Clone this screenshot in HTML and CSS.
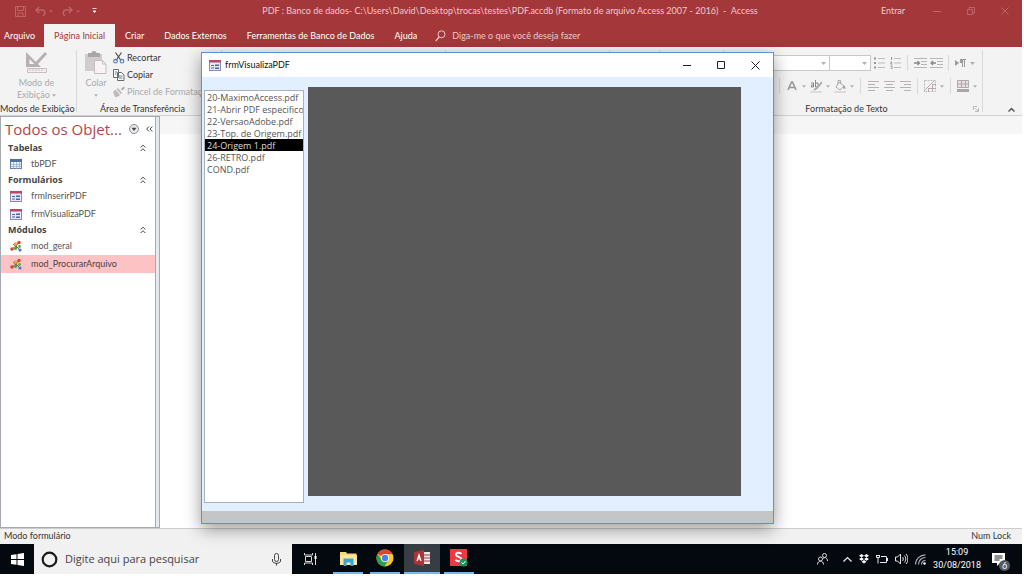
FILE: index.html
```
<!DOCTYPE html>
<html lang="pt-BR">
<head>
<meta charset="utf-8">
<title>PDF : Banco de dados - Access</title>
<link rel="stylesheet" href="styles.css">
</head>
<body>
<svg class="defs" width="0" height="0" aria-hidden="true">
  <symbol id="form" viewBox="0 0 12 11"><rect x=".5" y=".5" width="11" height="10" fill="#e4e9f5" stroke="#8b8fae"/><path d="M0 0h12v2.500H0z" fill="#b8476a"/><path d="M2 5.500h3M2 8h3" stroke="#4a65a8"/><path d="M6 4.500h4v1.500H6zM6 7.500h4V9H6z" fill="#4a65a8"/></symbol>
  <symbol id="table" viewBox="0 0 12 11"><rect x=".5" y=".5" width="11" height="9" fill="#edf3fb" stroke="#6480ad"/><path d="M0 0h12v3H0z" fill="#4d70a8"/><path d="M1 5.500h10M1 7.500h10M3.500 3v7M6.500 3v7M9.500 3v7" stroke="#8ea8cf" stroke-width=".7"/></symbol>
  <symbol id="module" viewBox="0 0 12 12"><path d="M2 9l4-3 4 4M6 6l3-4M3 4l4 4" stroke="#7b6a55" fill="none"/><circle cx="9" cy="2.500" r="1.700" fill="#e0452f"/><circle cx="5.500" cy="4" r="1.800" fill="#e9a23b"/><circle cx="2" cy="9" r="1.800" fill="#d9472b"/><circle cx="5.500" cy="8.500" r="1.600" fill="#4aa556"/><circle cx="10" cy="10" r="1.600" fill="#4878d0"/><circle cx="9.500" cy="6.500" r="1.400" fill="#55a855"/></symbol>
  <symbol id="dbl" viewBox="0 0 6 8"><path d="M.7 3.500L3 1.200l2.300 2.300M.7 7L3 4.700 5.300 7" fill="none" stroke="#444"/></symbol>
  <symbol id="caret" viewBox="0 0 5 3"><path d="M0 0h5L2.500 3z" fill="currentColor"/></symbol>
</svg>
<div class="screen">
  <header class="titlebar">
    <div class="quick">
      <button aria-label="Salvar"><svg width="11" height="11" viewBox="0 0 11 11"><path d="M.5.5h10v10h-10zM2.500.5v4h6v-4M3 10V7h5v3" fill="none" stroke="currentColor"/></svg></button>
      <button aria-label="Desfazer"><svg width="18" height="11" viewBox="0 0 18 11"><path d="M4 1L1 4l3 3M1 4h6c3 0 4 4 1 6" fill="none" stroke="currentColor" stroke-width="1.500"/><path d="M14 4.500h4l-2 2z" fill="currentColor"/></svg></button>
      <button aria-label="Refazer"><svg width="18" height="11" viewBox="0 0 18 11"><path d="M7 1l3 3-3 3M10 4H4C1 4 0 8 3 10" fill="none" stroke="currentColor" stroke-width="1.500"/><path d="M14 4.500h4l-2 2z" fill="currentColor"/></svg></button>
      <button class="more" aria-label="Personalizar"><svg width="5" height="6" viewBox="0 0 5 6"><path d="M.5.5h4M1 3h3L2.500 4.500z" fill="currentColor" stroke="currentColor" stroke-width=".8"/></svg></button>
    </div>
    <h1 class="title">PDF : Banco de dados- C:\Users\David\Desktop\trocas\testes\PDF.accdb (Formato de arquivo Access 2007 - 2016) &nbsp;- &nbsp;Access</h1>
    <button class="signin">Entrar</button>
    <div class="winbtns">
      <button aria-label="Minimizar"><svg width="8" height="8" viewBox="0 0 8 8"><path d="M0 4.500h8" stroke="currentColor"/></svg></button>
      <button aria-label="Restaurar"><svg width="8" height="8" viewBox="0 0 8 8"><path d="M.5 2.500h5v5h-5zM2 2V.5h5.500V6H6" fill="none" stroke="currentColor"/></svg></button>
      <button aria-label="Fechar"><svg width="8" height="8" viewBox="0 0 8 8"><path d="M.5.5l7 7M7.500.5l-7 7" stroke="currentColor"/></svg></button>
    </div>
  </header>
  <nav class="tabs">
    <button>Arquivo</button>
    <button class="active">Página Inicial</button>
    <button>Criar</button>
    <button>Dados Externos</button>
    <button>Ferramentas de Banco de Dados</button>
    <button>Ajuda</button>
    <label class="tell"><svg width="11" height="12" viewBox="0 0 11 12"><circle cx="6.500" cy="4.300" r="3.500" fill="none" stroke="currentColor"/><path d="M4.200 7L.7 11" stroke="currentColor" stroke-width="1.200"/></svg><input aria-label="Diga-me" placeholder="Diga-me o que você deseja fazer"></label>
  </nav>
  <section class="ribbon">
    <div class="group views">
      <button class="big"><svg width="23" height="23" viewBox="0 0 23 23"><path d="M1 1v15h15zM4.500 8v5h5z" fill="#b5b1b3" fill-rule="evenodd"/><path d="M21 2L10 14" stroke="#b5b1b3" stroke-width="3"/><path d="M10.500 12l-2 4 4-2z" fill="#b5b1b3"/><path d="M2.500 17.500h19v4h-19zM5 18v2M8 18v2M11 18v2M14 18v2M17 18v2" fill="#f5eeee" stroke="#cdbfc1"/></svg><span>Modo de<br>Exibição <svg class="car" width="4" height="3"><use href="#caret"/></svg></span></button>
      <h2>Modos de Exibição</h2>
    </div>
    <div class="group clip">
      <div class="cols">
        <button class="big"><svg width="22" height="23" viewBox="0 0 22 23"><path d="M0 3h17v17H0z" fill="#d1cdcf"/><path d="M3 2h3l2-2h2l2 2h3v4H3z" fill="#aaa6a8"/><path d="M9.500 9.500h8l3.500 3.500v9.500H9.500z" fill="#f8f3f5" stroke="#c5bdc0"/><path d="M17.500 9.500V13H21" fill="none" stroke="#c5bdc0"/></svg><span>Colar<br><svg class="car" width="4" height="3"><use href="#caret"/></svg></span></button>
        <div class="small">
          <button><svg width="12" height="12" viewBox="0 0 12 12"><path d="M2.500.5l5.500 8M8.500.5l-5.500 8" stroke="#555" stroke-width="1.300"/><circle cx="2.500" cy="9.200" r="1.800" fill="none" stroke="#4f84bd" stroke-width="1.200"/><circle cx="9" cy="9.200" r="1.800" fill="none" stroke="#4f84bd" stroke-width="1.200"/></svg>Recortar</button>
          <button><svg width="12" height="12" viewBox="0 0 12 12"><path d="M.5.5h5v8h-5zM4.500 3.500h4l2.500 2.500v5.500H4.500z" fill="#fff" stroke="#6b6b6b"/><path d="M2 3h2M2 5h1.500M6 7h3.500M6 9h3.500" stroke="#4f84bd"/></svg>Copiar</button>
          <button class="off"><svg width="12" height="12" viewBox="0 0 12 12"><path d="M8 3l3-2.500 1 1.500-3 2.500z" fill="#aaa"/><path d="M5 2l4 5-1.500 1L3.500 3zM2.500 3.500L7 9c-2 2-4 2-5 2L0 6z" fill="#bdb9bb"/></svg>Pincel de Formatação</button>
        </div>
      </div>
      <h2>Área de Transferência</h2>
    </div>
    <div class="group g1"></div><div class="group g2"></div><div class="group g3"></div><div class="group g4"></div>
    <div class="group format">
      <div class="row r1">
        <button class="combo c1" aria-label="Fonte"><svg class="car" width="5" height="3"><use href="#caret"/></svg></button>
        <button class="combo c2" aria-label="Tamanho"><svg class="car" width="5" height="3"><use href="#caret"/></svg></button>
        <button aria-label="Marcadores"><svg width="11" height="12" viewBox="0 0 11 12"><path d="M0 1.500h2M0 6h2M0 10.500h2" stroke="#999" stroke-width="2"/><path d="M4 1.500h7M4 6h7M4 10.500h7" stroke="#c0bcbe"/></svg></button>
        <button aria-label="Numeração"><svg width="11" height="12" viewBox="0 0 11 12"><path d="M1.500 0v3M.5 5h1.500L.5 7H2.500M.5 9H2v3H.5" fill="none" stroke="#999"/><path d="M4 1.500h7M4 6h7M4 10.500h7" stroke="#c0bcbe"/></svg></button>
        <i class="sep"></i>
        <button aria-label="Diminuir recuo"><svg width="13" height="11" viewBox="0 0 13 11"><path d="M0 .5h13M7 3.500h6M7 6.500h6M0 9.500h13" stroke="#b9b5b7"/><path d="M0 5h5M3.500 3l2 2-2 2" fill="none" stroke="#888" stroke-width="1.300"/></svg></button>
        <button aria-label="Aumentar recuo"><svg width="13" height="11" viewBox="0 0 13 11"><path d="M0 .5h13M7 3.500h6M7 6.500h6M0 9.500h13" stroke="#b9b5b7"/><path d="M1 5h5M3 3L1 5l2 2" fill="none" stroke="#888" stroke-width="1.300"/></svg></button>
        <i class="sep"></i>
        <button class="dd" aria-label="Direção"><svg width="11" height="8" viewBox="0 0 11 8"><path d="M0 1v6l4-3z" fill="#999"/><path d="M5 .5h6M7.500 1v7M9.500 1v7" stroke="#999"/><circle cx="6.500" cy="2.500" r="1.800" fill="#999"/></svg><svg class="car" width="5" height="3"><use href="#caret"/></svg></button>
      </div>
      <div class="row r2">
        <i class="sep"></i>
        <button class="dd" aria-label="Cor da fonte"><svg width="12" height="13" viewBox="0 0 12 13"><path d="M2 10L5.500 2h1L10 10M3.500 7.500h5" fill="none" stroke="#999" stroke-width="1.600"/></svg><svg class="car" width="4" height="3"><use href="#caret"/></svg></button>
        <button class="dd" aria-label="Realce"><svg width="12" height="13" viewBox="0 0 12 13"><path d="M1 3h2.500v4H1.500V5h2M5.500 0v7H8V3H6" fill="none" stroke="#888"/><path d="M12 2L7 8l-3 2" stroke="#aaa" stroke-width="1.800" fill="none"/><path d="M0 11h12v2H0z" fill="#e3d8db"/></svg><svg class="car" width="4" height="3"><use href="#caret"/></svg></button>
        <button class="dd" aria-label="Cor de fundo"><svg width="12" height="13" viewBox="0 0 12 13"><path d="M5 2l5 4-4 4-4-3zM4 4V.5h2.500V4" fill="none" stroke="#aaa"/><path d="M10 5l2 3.500h-3z" fill="#999"/><path d="M0 11h12v2H0z" fill="#e3d8db"/></svg><svg class="car" width="4" height="3"><use href="#caret"/></svg></button>
        <i class="sep"></i>
        <button aria-label="À esquerda"><svg width="11" height="10" viewBox="0 0 11 10"><path d="M0 .5h11M0 3.500h7M0 6.500h11M0 9.500h7" stroke="#b5b1b3"/></svg></button>
        <button aria-label="Centralizar"><svg width="11" height="10" viewBox="0 0 11 10"><path d="M0 .5h11M2 3.500h7M0 6.500h11M2 9.500h7" stroke="#b5b1b3"/></svg></button>
        <button aria-label="À direita"><svg width="11" height="10" viewBox="0 0 11 10"><path d="M0 .5h11M4 3.500h7M0 6.500h11M4 9.500h7" stroke="#b5b1b3"/></svg></button>
        <i class="sep"></i>
        <button class="dd" aria-label="Linhas de grade"><svg width="12" height="12" viewBox="0 0 12 12"><path d="M.5.5h11v11H.5z" fill="none" stroke="#bbb" stroke-dasharray="2 1"/><path d="M0 11L11 0M4.500 8v4M8.500 4v8M8 4.500h4M4 8.500h8" stroke="#bba9ae"/></svg><svg class="car" width="4" height="3"><use href="#caret"/></svg></button>
        <i class="sep"></i>
        <button class="dd" aria-label="Cor alternada"><svg width="12" height="12" viewBox="0 0 12 12"><path d="M.5.5h11v7H.5zM0 4h12M4.500 0v8M8.500 0v8" fill="#e8e0e2" stroke="#b0a8ab"/><path d="M0 9h12v3H0z" fill="#aaa6a8"/></svg><svg class="car" width="4" height="3"><use href="#caret"/></svg></button>
      </div>
      <h2>Formatação de Texto</h2>
      <button class="launch" aria-label="Mais opções"><svg width="6" height="6" viewBox="0 0 6 6"><path d="M.5 4V.5H4M2 2l3 3M5.500 2v3.500H2" fill="none" stroke="#bbb"/></svg></button>
    </div>
    <button class="collapse" aria-label="Recolher"><svg width="7" height="5" viewBox="0 0 7 5"><path d="M.5 4.500l3-3 3 3" fill="none" stroke="#555" stroke-width="1.500"/></svg></button>
  </section>
  <main class="work">
    <aside class="pane">
      <div class="panehead"><h2>Todos os Objet...</h2>
        <button aria-label="Filtro"><svg width="10" height="10" viewBox="0 0 10 10"><circle cx="5" cy="5" r="4.500" fill="#e9e9ec" stroke="#8a8c92"/><path d="M2.500 3.800h5L5 7z" fill="#444"/></svg></button>
        <button aria-label="Recolher painel"><svg width="7" height="6" viewBox="0 0 7 6"><path d="M3 .5L.7 3 3 5.500M6.300.5L4 3l2.300 2.500" fill="none" stroke="#444"/></svg></button>
      </div>
      <h3>Tabelas<svg width="6" height="8"><use href="#dbl"/></svg></h3>
      <ul><li><svg width="12" height="11"><use href="#table"/></svg>tbPDF</li></ul>
      <h3>Formulários<svg width="6" height="8"><use href="#dbl"/></svg></h3>
      <ul><li><svg width="12" height="11"><use href="#form"/></svg>frmInserirPDF</li><li><svg width="12" height="11"><use href="#form"/></svg>frmVisualizaPDF</li></ul>
      <h3>Módulos<svg width="6" height="8"><use href="#dbl"/></svg></h3>
      <ul><li><svg width="12" height="12"><use href="#module"/></svg>mod_geral</li><li class="sel"><svg width="12" height="12"><use href="#module"/></svg>mod_ProcurarArquivo</li></ul>
    </aside>
    <div class="canvas"></div>
  </main>
  <footer class="status"><span>Modo formulário</span><span>Num Lock</span></footer>
  <div class="taskbar">
    <button class="start" aria-label="Iniciar"><svg width="13" height="13" viewBox="0 0 13 13"><path d="M0 2l5.500-.8V6H0zM6.500 1L13 0v6H6.500zM0 7h5.500v4.800L0 11zM6.500 7H13v6l-6.500-1z" fill="#fff"/></svg></button>
    <label class="search"><svg width="17" height="17" viewBox="0 0 17 17"><circle cx="8.500" cy="8.500" r="6.800" fill="none" stroke="#1b1b1b" stroke-width="2.200"/></svg><input aria-label="Pesquisar" placeholder="Digite aqui para pesquisar"><svg width="9" height="13" viewBox="0 0 9 13"><rect x="2.500" y=".5" width="4" height="8" rx="2" fill="none" stroke="#444"/><path d="M.5 6v2c0 3 8 3 8 0V6M4.500 10v2.500" fill="none" stroke="#444"/></svg></label>
    <button class="view" aria-label="Visão de tarefas"><svg width="13" height="12" viewBox="0 0 13 12"><path d="M.5 0v2h8V0M.5 12v-2h8v2M1.500 3.500h6v5h-6zM11.500 0v12" fill="none" stroke="#d8d8d8"/><path d="M10.500 3h2v3h-2z" fill="#fff"/></svg></button>
    <button class="app" aria-label="Explorador"><svg width="17" height="15" viewBox="0 0 17 15"><path d="M0 1h6l1 1.500h9.500V14H0z" fill="#f7d673"/><path d="M0 4h17v10H0z" fill="#ffe596"/><path d="M3.500 7.500h10V15h-3v-3.500h-4V15h-3z" fill="#35a4e0"/></svg></button>
    <button class="app" aria-label="Chrome"><svg width="18" height="18" viewBox="0 0 18 18"><circle cx="9" cy="9" r="8.500" fill="#f6c927"/><path d="M9 9L1.600 4.700A8.500 8.500 0 0 1 16.500 5H9z" fill="#df4333"/><path d="M1.600 4.700A8.500 8.500 0 0 0 8.500 17.500l4-6.500L9 9 5.500 11z" fill="#2c9e52"/><circle cx="9" cy="9" r="4" fill="#fff"/><circle cx="9" cy="9" r="3.200" fill="#4383ee"/></svg></button>
    <button class="app on" aria-label="Access"><svg width="17" height="16" viewBox="0 0 17 16"><path d="M9 2h7v12H9z" fill="#f4e9ea"/><path d="M9 5h7M9 8h7M9 11h7" stroke="#a4373a" stroke-width="1.200"/><path d="M0 2l10-2v16L0 14z" fill="#a8353a"/><path d="M3 11l2-6 2 6M3.700 9h2.600" fill="none" stroke="#fff" stroke-width="1.200"/></svg></button>
    <button class="app" aria-label="S"><svg width="18" height="18" viewBox="0 0 18 18"><path d="M0 0h17v17H0z" fill="#ee3843"/><path d="M11.500 5C10 3 6 3.500 6 5.700S11.500 8 11.500 10.300 7 13 5.500 10.800" fill="none" stroke="#fff" stroke-width="2"/><circle cx="13.500" cy="13.500" r="4" fill="#15945c"/><path d="M11.500 13.500l1.500 1.500 2.500-3" fill="none" stroke="#fff"/></svg></button>
    <div class="tray">
      <svg class="people" width="11" height="12" viewBox="0 0 11 12"><circle cx="7.500" cy="2.500" r="2" fill="none" stroke="#ddd"/><circle cx="3.500" cy="6" r="2" fill="none" stroke="#ddd"/><path d="M.5 11.500c0-4.500 6-4.500 6 0M6 5.500c2-2 4.500-.5 4.500 2.500" fill="none" stroke="#ddd"/></svg>
      <svg width="9" height="6" viewBox="0 0 9 6"><path d="M.5 5.500l4-4 4 4" fill="none" stroke="#eee" stroke-width="1.200"/></svg>
      <svg width="10" height="10" viewBox="0 0 10 10"><path d="M2.500 0L5 1.700 2.500 3.400 0 1.700zM7.500 0L10 1.700 7.500 3.400 5 1.700zM2.500 3.400L5 5 2.500 6.800 0 5zM7.500 3.400L10 5 7.500 6.800 5 5zM5 6l2.500 1.700L5 9.500 2.500 7.700z" fill="#fff"/></svg>
      <svg width="12" height="10" viewBox="0 0 12 10"><path d="M5 2.500h5.500v6H4M11.500 4v3" fill="none" stroke="#e8e8e8"/><path d="M.5 1v2.500h3V1M2 3v6.500M0 1.500h4" stroke="#e8e8e8" fill="none"/></svg>
      <svg width="13" height="12" viewBox="0 0 13 12"><path d="M.5 4h2l3-3v10l-3-3h-2zM7.500 4c1 1 1 3 0 4M9.300 2.500c2 2 2 5 0 7M11 1c2.500 3 2.500 7 0 10" fill="none" stroke="#e8e8e8"/></svg>
      <svg width="11" height="11" viewBox="0 0 11 11"><path d="M.5 10.500C.5 5 5 .8 10.500.8M3.500 10.500c0-4 3-7 7-7M6.500 10.500c0-2.500 1.500-4 4-4" fill="none" stroke="#a9abad" stroke-width="1.200"/><circle cx="9.500" cy="9.500" r="1.200" fill="#fff"/></svg>
      <time class="clock">15:09<br>30/08/2018</time>
      <button class="notes" aria-label="Notificações"><svg width="13" height="13" viewBox="0 0 13 13"><path d="M0 0h13v10H8l-3 3v-3H0z" fill="#fff"/><path d="M2.500 3h8M2.500 5h8M2.500 7h5" stroke="#222"/></svg><b>6</b></button>
    </div>
  </div>
  <section class="dialog" aria-label="frmVisualizaPDF">
    <header><svg width="12" height="11"><use href="#form"/></svg><h2>frmVisualizaPDF</h2>
      <div class="dlgbtns">
      <button aria-label="Minimizar"><svg width="9" height="9" viewBox="0 0 9 9"><path d="M0 4.500h8" stroke="#222"/></svg></button>
      <button aria-label="Maximizar"><svg width="9" height="9" viewBox="0 0 9 9"><path d="M.5.5h7v7h-7z" fill="none" stroke="#222"/></svg></button>
      <button aria-label="Fechar"><svg width="9" height="9" viewBox="0 0 9 9"><path d="M.5.5l8 8M8.500.5l-8 8" stroke="#222"/></svg></button></div>
    </header>
    <div class="body">
      <select class="files" size="8" aria-label="Arquivos">
        <option>20-MaximoAccess.pdf</option><option>21-Abrir PDF especifico.pdf</option><option>22-VersaoAdobe.pdf</option><option>23-Top. de Origem.pdf</option><option selected>24-Origem 1.pdf</option><option>26-RETRO.pdf</option><option>COND.pdf</option>
      </select>
      <div class="viewer"></div>
    </div>
    <div class="foot"></div>
  </section>
</div>
</body>
</html>
```
FILE: styles.css
```
* { box-sizing: border-box; }
body, h1, h2, h3, ul { margin: 0; padding: 0; font-size: inherit; font-weight: 400; }
body { background: #fff; color: #333; font: 9px/12px Lato, "Open Sans", "Noto Sans", sans-serif; }
button, input, select { font: inherit; color: inherit; background: none; border: 0; padding: 0; margin: 0; outline: 0; border-radius: 0; }
button { display: flex; align-items: center; justify-content: center; white-space: nowrap; }
svg { flex: none; }
.defs { position: absolute; }
.screen { position: relative; height: 100vh; padding: 0 2px 2px 0; display: flex; flex-direction: column; overflow: hidden; }

.titlebar { height: 24px; background: #a4373a; color: #f0c8ca; display: flex; align-items: center; padding-bottom: 2px; }
.quick { display: flex; gap: 9px; padding-left: 15px; width: 157px; color: #bf6367; }
.more { color: #fff; margin-left: 3px; }
.title { flex: 1; text-align: center; white-space: nowrap; }
.signin { width: 60px; }
.winbtns { display: flex; padding: 0 13px 0 10px; gap: 26px; color: #bf6367; }

.tabs { height: 23px; background: #a4373a; color: #fff; display: flex; }
.tabs button { padding: 0 10px; }
.tabs button:first-child { padding: 0 9px 0 4px; }
.tabs .active { background: #f3f3f3; color: #a4373a; }
.tell { display: flex; align-items: center; gap: 6px; padding-left: 8px; color: #efc6c8; }
.tell input { width: 160px; }
::placeholder { color: inherit; opacity: 1; }

.ribbon { height: 69px; background: #f3f3f3; border-bottom: 1px solid #d2d2d2; display: flex; }
.group { position: relative; display: flex; flex-direction: column; padding-top: 4px; }
.group::after { content: ""; position: absolute; right: 0; top: 3px; bottom: 3px; width: 1px; background: #d8d8d8; }
.group h2 { margin-top: auto; text-align: center; white-space: nowrap; }
.views { width: 77px; }
.views h2 { padding-right: 3px; }
.big { flex-direction: column; gap: 3px; color: #aaa; }
.views .big { padding-right: 4px; }
.car { vertical-align: middle; color: #b0b0b0; }
.clip { width: 145px; }
.clip h2 { padding-right: 14px; }
.cols { display: flex; padding-left: 8px; gap: 6px; }
.cols .big { padding-bottom: 2px; }
.small { display: flex; flex-direction: column; gap: 5px; align-items: flex-start; padding-top: 1px; }
.small button { gap: 2px; color: #333; }
.small .off { color: #aaa; }
.g1 { width: 224px; } .g2 { width: 164px; } .g3 { width: 50px; } .g4 { width: 64px; }
.format { width: 259px; }
.format h2 { padding-right: 14px; }
.row { display: flex; align-items: center; justify-content: flex-end; height: 16px; }
.r1 { margin-top: 4px; padding-right: 6px; }
.r2 { margin-top: 7px; padding-right: 4px; }
.row button { width: 16px; }
.row .dd { width: 24px; gap: 4px; }
.row .combo { height: 16px; border: 1px solid #c9c9c9; background: #fff; justify-content: flex-end; padding-right: 3px; }
.row .c1 { width: 74px; }
.row .c2 { width: 41px; border-left-width: 0; }
.sep { width: 1px; height: 16px; background: #d8d8d8; margin: 0 4px; }
.launch { position: absolute; right: 4px; bottom: 3px; }
.collapse { margin-left: auto; align-self: flex-end; padding: 0 7px 3px; }

.work { flex: 1; display: flex; min-height: 0; }
.pane { width: 160px; border: 1px solid #a5a9b0; background: #fff; box-shadow: inset -3px 0 #e6e9ee, inset -4px 0 #a5a9b0; padding-right: 4px; }
.panehead { display: flex; align-items: center; height: 24px; padding: 0 4px; gap: 7px; }
.panehead h2 { font: 15px/24px "Open Sans", sans-serif; color: #b0474a; flex: 1; white-space: nowrap; }
.pane h3 { display: flex; justify-content: space-between; align-items: center; padding: 0 9px 0 7px; font: 700 9px/14px "Open Sans", sans-serif; color: #444; }
.pane ul { list-style: none; }
.pane li { display: flex; align-items: center; height: 18px; gap: 9px; padding-left: 9px; color: #555; }
.pane .sel { background: #fcc2c4; color: #444; }
.canvas { flex: 1; border-top: 18px solid #f6f6f6; background: #fff; }
.status { height: 16px; background: #f1f1f1; border-top: 1px solid #ccc; display: flex; justify-content: space-between; align-items: center; padding: 0 11px 1px 4px; }

.taskbar { height: 30px; background: #040910; color: #fff; display: flex; }
.start { width: 34px; }
.search { width: 258px; background: #f1f1f1; color: #444; display: flex; align-items: center; padding: 0 11px 0 7px; gap: 7px; }
.search input { flex: 1; min-width: 0; font: 11px/16px "Open Sans", sans-serif; }
.view { width: 36px; }
.app { width: 30px; margin-left: 5px; border-bottom: 2px solid #76b9ed; }
.app + .app { margin-left: 7px; }
.app.on { width: 36px; margin-left: 4px; background: #373d44; }
.app.on + .app { margin-left: 4px; }
.tray { margin-left: auto; display: flex; align-items: center; gap: 7px; padding-right: 12px; }
.people { margin-right: 8px; }
.clock { text-align: center; line-height: 13px; font-family: Roboto, sans-serif; }
.notes { position: relative; margin-left: 4px; width: 18px; height: 24px; justify-content: flex-start; }
.notes b { position: absolute; right: 0; bottom: 0; width: 11px; height: 11px; border-radius: 50%; background: #555a60; line-height: 11px; font-weight: 400; }

.dialog { position: absolute; left: 201px; top: 52px; width: 573px; height: 472px; border: 1px solid #4f97d6; background: #e2efff; display: flex; flex-direction: column; box-shadow: 0 5px 16px rgba(0, 0, 0, .4); }
.dialog header { height: 24px; background: #fff; display: flex; align-items: center; gap: 4px; padding: 0 13px 0 7px; }
.dialog h2 { color: #111; }
.dlgbtns { margin-left: auto; display: flex; gap: 25px; }
.body { flex: 1; display: flex; padding: 10px 32px 8px 2px; min-height: 0; }
.files { width: 100px; margin: 3px 4px 0 0; border: 1px solid #aab0ba; background: #fff; color: #555; overflow: hidden; font-family: "Open Sans", sans-serif; }
.files option { padding: 0 2px; min-height: 12px; line-height: 11px; height: 12px; }
.files option:checked { background: #000 linear-gradient(#000, #000); color: #ddd; -webkit-text-fill-color: #ddd; }
.viewer { flex: 1; background: #595959; margin-bottom: 7px; }
.foot { height: 12px; background: #c3c5c7; }
```
